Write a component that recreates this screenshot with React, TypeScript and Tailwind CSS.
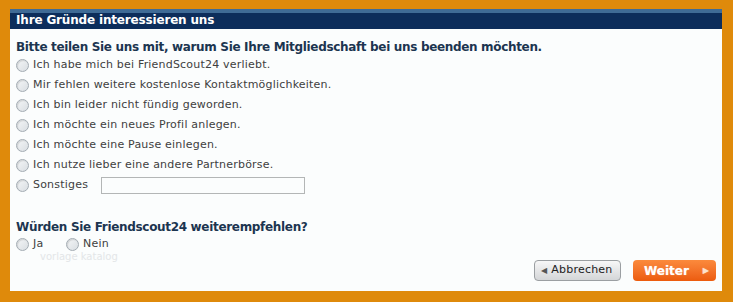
const font = { fontFamily: '"DejaVu Sans", Verdana, sans-serif' };

function Radio() {
  return (
    <span className="inline-block w-[13px] h-[13px] rounded-full border border-[#a3acb3] bg-gradient-to-br from-[#f4f6f7] to-[#d9dee2] shadow-[inset_1px_1px_1px_rgba(0,0,0,0.12)] shrink-0" />
  );
}

const reasons = [
  "Ich habe mich bei FriendScout24 verliebt.",
  "Mir fehlen weitere kostenlose Kontaktmöglichkeiten.",
  "Ich bin leider nicht fündig geworden.",
  "Ich möchte ein neues Profil anlegen.",
  "Ich möchte eine Pause einlegen.",
  "Ich nutze lieber eine andere Partnerbörse.",
];

export default function App() {
  return (
    <div
      className="w-[733px] h-[302px] bg-[#df8a0b] pl-[10px] pt-[9px] pr-[11px] pb-[11px]"
      style={font}
    >
      <div className="h-full flex flex-col bg-[#fbfdfd]">
        <div className="h-[20px] border-t-[4px] border-[#3f6b96] bg-[#0c2d5b] pl-[6px] text-white font-bold text-[12px] leading-[15px] tracking-[-0.17px]">
          Ihre Gründe interessieren uns
        </div>

        <div className="px-[6px] pt-[11px] flex flex-col flex-1">
          <h2 className="text-[#1c3550] font-bold text-[12px] leading-[14px] tracking-[-0.33px]">
            Bitte teilen Sie uns mit, warum Sie Ihre Mitgliedschaft bei uns beenden möchten.
          </h2>
          <div className="mt-[1px] flex flex-col text-[11px] text-[#404040] tracking-[0.2px]">
            {reasons.map((r) => (
              <label key={r} className="h-[20px] flex items-center gap-[4px]">
                <Radio />
                <span>{r}</span>
              </label>
            ))}
            <label className="h-[20px] flex items-center gap-[4px]">
              <Radio />
              <span className="w-[64px]">Sonstiges</span>
              <span className="w-[204px] h-[17px] border border-[#b3b6b6] bg-[#fbfdfd]" />
            </label>
          </div>

          <h2 className="mt-[25px] text-[#1c3550] font-bold text-[12px] leading-[14px] tracking-[-0.32px]">
            Würden Sie Friendscout24 weiterempfehlen?
          </h2>
          <div className="mt-[2px] flex items-center text-[11px] text-[#404040] tracking-[0.2px] h-[16px]">
            <label className="flex items-center gap-[4px] w-[50px]">
              <Radio />
              <span>Ja</span>
            </label>
            <label className="flex items-center gap-[4px]">
              <Radio />
              <span>Nein</span>
            </label>
          </div>

          <div className="flex items-start justify-between">
            <span className="ml-[24px] -mt-[1px] text-[10px] text-[#e3e6e8] leading-[12px]">vorlage katalog</span>
            <div className="flex gap-[12px] mt-[8px]">
              <button className="h-[21px] w-[87px] flex items-center gap-[4px] pl-[6px] rounded-[4px] border border-[#9b9fa2] bg-gradient-to-b from-[#f7f7f7] to-[#d4d6d8] text-[11px] text-[#222] tracking-[0.2px]">
                <span className="text-[8px] text-[#555]">◀</span>
                <span>Abbrechen</span>
              </button>
              <button className="h-[21px] w-[83px] flex items-center justify-between pl-[11px] pr-[7px] rounded-[4px] bg-gradient-to-b from-[#fb8a3c] to-[#ec5b0c] text-[12px] font-bold text-white [text-shadow:0_0_1px_rgba(255,255,255,0.6)]">
                <span>Weiter</span>
                <span className="text-[8px] text-[#fde2cc]">▶</span>
              </button>
            </div>
          </div>
        </div>
      </div>
    </div>
  );
}
